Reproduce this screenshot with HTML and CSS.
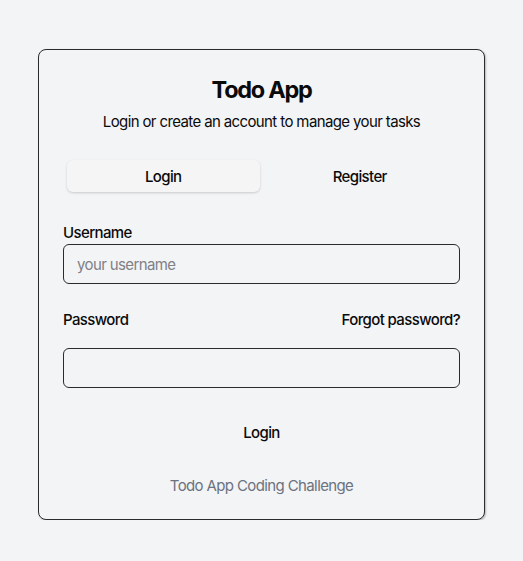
FILE: index.html
```html
<!DOCTYPE html>
<html lang="en">
<head>
<meta charset="utf-8">
<title>Todo App</title>
<link rel="stylesheet" href="styles.css">
</head>
<body>
<main class="page">
  <section class="card">
    <header class="card-header">
      <h1 class="title">Todo App</h1>
      <p class="subtitle">Login or create an account to manage your tasks</p>
    </header>
    <div class="tabs">
      <button class="tab tab-active">Login</button>
      <button class="tab">Register</button>
    </div>
    <form class="form">
      <div class="field field-user">
        <label class="label" for="username">Username</label>
        <input class="input" id="username" type="text" placeholder="your username">
      </div>
      <div class="field field-pass">
        <div class="label-row">
          <label class="label" for="password">Password</label>
          <a class="link" href="#">Forgot password?</a>
        </div>
        <input class="input" id="password" type="password">
      </div>
      <button type="button" class="submit">Login</button>
    </form>
    <footer class="card-footer">Todo App Coding Challenge</footer>
  </section>
</main>
</body>
</html>
```
FILE: styles.css
```css
* { box-sizing: border-box; }
html, body { margin: 0; padding: 0; }
body {
  background: #f3f4f6;
  font-family: Inter, "Noto Sans", sans-serif;
  color: #0a0a0a;
  letter-spacing: -0.62px;
}
.page {
  display: flex;
  justify-content: center;
  padding-top: 49px;
}
.card {
  width: 447px;
  border: 1px solid #2b2b2b;
  border-radius: 8px;
  background: #f3f4f6;
  box-shadow: 1px 1px 2px rgba(0,0,0,0.25);
  padding: 24px 24px 21px;
}
.card-header { text-align: center; }
.title {
  margin: 0;
  font-size: 23.5px;
  line-height: 32px;
  font-weight: 700;
  letter-spacing: -1.3px;
}
.subtitle {
  margin: 4px 0 0;
  font-size: 15px;
  line-height: 24px;
}
.tabs {
  margin-top: 22px;
  display: grid;
  grid-template-columns: 1fr 1fr;
  gap: 4px;
  padding: 4px;
}
.tab {
  height: 32px;
  border: 0;
  border-radius: 6px;
  background: transparent;
  font-family: inherit;
  font-size: 15px;
  font-weight: 500;
  letter-spacing: -0.62px;
  color: #0a0a0a;
}
.tab-active {
  background: #f5f5f6;
  box-shadow: 0 1px 3px rgba(0,0,0,0.12), 0 1px 2px rgba(0,0,0,0.06);
}
.form { display: flex; flex-direction: column; }
.field { display: flex; flex-direction: column; }
.field-user { margin-top: 29px; gap: 3px; }
.field-pass { margin-top: 28px; gap: 20px; }
.label-row {
  display: flex;
  justify-content: space-between;
  align-items: center;
}
.label {
  font-size: 15px;
  line-height: 16px;
  font-weight: 500;
}
.link {
  font-size: 15px;
  line-height: 16px;
  font-weight: 500;
  color: #0a0a0a;
  text-decoration: none;
}
.input {
  height: 40px;
  width: 100%;
  border: 1px solid #2b2b2b;
  border-radius: 6px;
  background: transparent;
  padding: 0 13px;
  font-family: inherit;
  font-size: 15px;
  letter-spacing: -0.62px;
  color: #0a0a0a;
}
.input::placeholder { color: #808085; }
.submit {
  margin-top: 24px;
  height: 40px;
  border: 0;
  background: transparent;
  font-family: inherit;
  font-size: 15px;
  font-weight: 500;
  letter-spacing: -0.62px;
  color: #0a0a0a;
}
.card-footer {
  margin-top: 22px;
  text-align: center;
  font-size: 15px;
  line-height: 24px;
  color: #6b7280;
}
```
